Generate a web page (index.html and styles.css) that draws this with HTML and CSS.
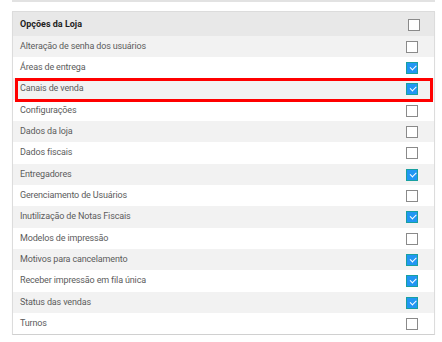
FILE: index.html
```html
<!DOCTYPE html>
<html lang="pt">
<head>
<meta charset="utf-8">
<link rel="stylesheet" href="styles.css">
</head>
<body>
<div class="page">
  <div class="prev-card"></div>
  <div class="card">
    <div class="row head">
      <span class="label">Opções da Loja</span>
      <span class="box"></span>
    </div>
    <div class="row odd"><span class="label">Alteração de senha dos usuários</span><span class="box"></span></div>
    <div class="row"><span class="label">Áreas de entrega</span><span class="box on"></span></div>
    <div class="row odd highlight"><span class="label">Canais de venda</span><span class="box on"></span><span class="mark"></span></div>
    <div class="row"><span class="label">Configurações</span><span class="box"></span></div>
    <div class="row odd"><span class="label">Dados da loja</span><span class="box"></span></div>
    <div class="row"><span class="label">Dados fiscais</span><span class="box"></span></div>
    <div class="row odd"><span class="label">Entregadores</span><span class="box on"></span></div>
    <div class="row"><span class="label">Gerenciamento de Usuários</span><span class="box"></span></div>
    <div class="row odd"><span class="label">Inutilização de Notas Fiscais</span><span class="box on"></span></div>
    <div class="row"><span class="label">Modelos de impressão</span><span class="box"></span></div>
    <div class="row odd"><span class="label">Motivos para cancelamento</span><span class="box on"></span></div>
    <div class="row"><span class="label">Receber impressão em fila única</span><span class="box on"></span></div>
    <div class="row odd"><span class="label">Status das vendas</span><span class="box on"></span></div>
    <div class="row"><span class="label">Turnos</span><span class="box"></span></div>
  </div>
</div>
</body>
</html>
```
FILE: styles.css
```css
* { box-sizing: border-box; }
html, body { margin: 0; padding: 0; background: #fff; }
body { font-family: Roboto, "Noto Sans", sans-serif; }
.page { padding-left: 12px; width: 435px; }
.prev-card { height: 2px; background: #e2e2e2; }
.card {
  margin-top: 9px;
  border: 1px solid #dcdcdc;
  border-bottom-color: #d0d0d0;
  box-shadow: 0 1px 1px rgba(0,0,0,0.06);
}
.row {
  position: relative;
  display: flex;
  align-items: center;
  justify-content: space-between;
  height: 21px;
  padding: 0 16px 0 7px;
  background: #fff;
}
.row:nth-child(3n+4) { height: 22px; }
.row.odd { background: #f2f2f2; }
.row.head {
  height: 24px;
  background: #e8e8e8;
  padding-right: 14px;
}
.label {
  font-size: 9px;
  line-height: 10px;
  color: #5c5c5c;
  letter-spacing: -0.15px;
  margin-top: -2px;
}
.head .label { font-weight: 700; color: #1e1e1e; margin-top: -1px; letter-spacing: 0; }
.box {
  width: 12px;
  height: 12px;
  border: 1.5px solid #8a8a8a;
  background: #fff;
  position: relative;
}
.head .box { margin-top: 1px; }
.box.on {
  background: #2196f3;
  border: 1px solid #18a0a0;
}
.box.on::after {
  content: "";
  position: absolute;
  left: 2.5px;
  top: 2px;
  width: 5px;
  height: 2.5px;
  border-left: 1.6px solid #fff;
  border-bottom: 1.6px solid #fff;
  transform: rotate(-45deg);
}
.mark {
  position: absolute;
  z-index: 2;
  left: 2px;
  right: 1px;
  top: 0;
  height: 24px;
  border: 3px solid #f00;
  pointer-events: none;
}
```
